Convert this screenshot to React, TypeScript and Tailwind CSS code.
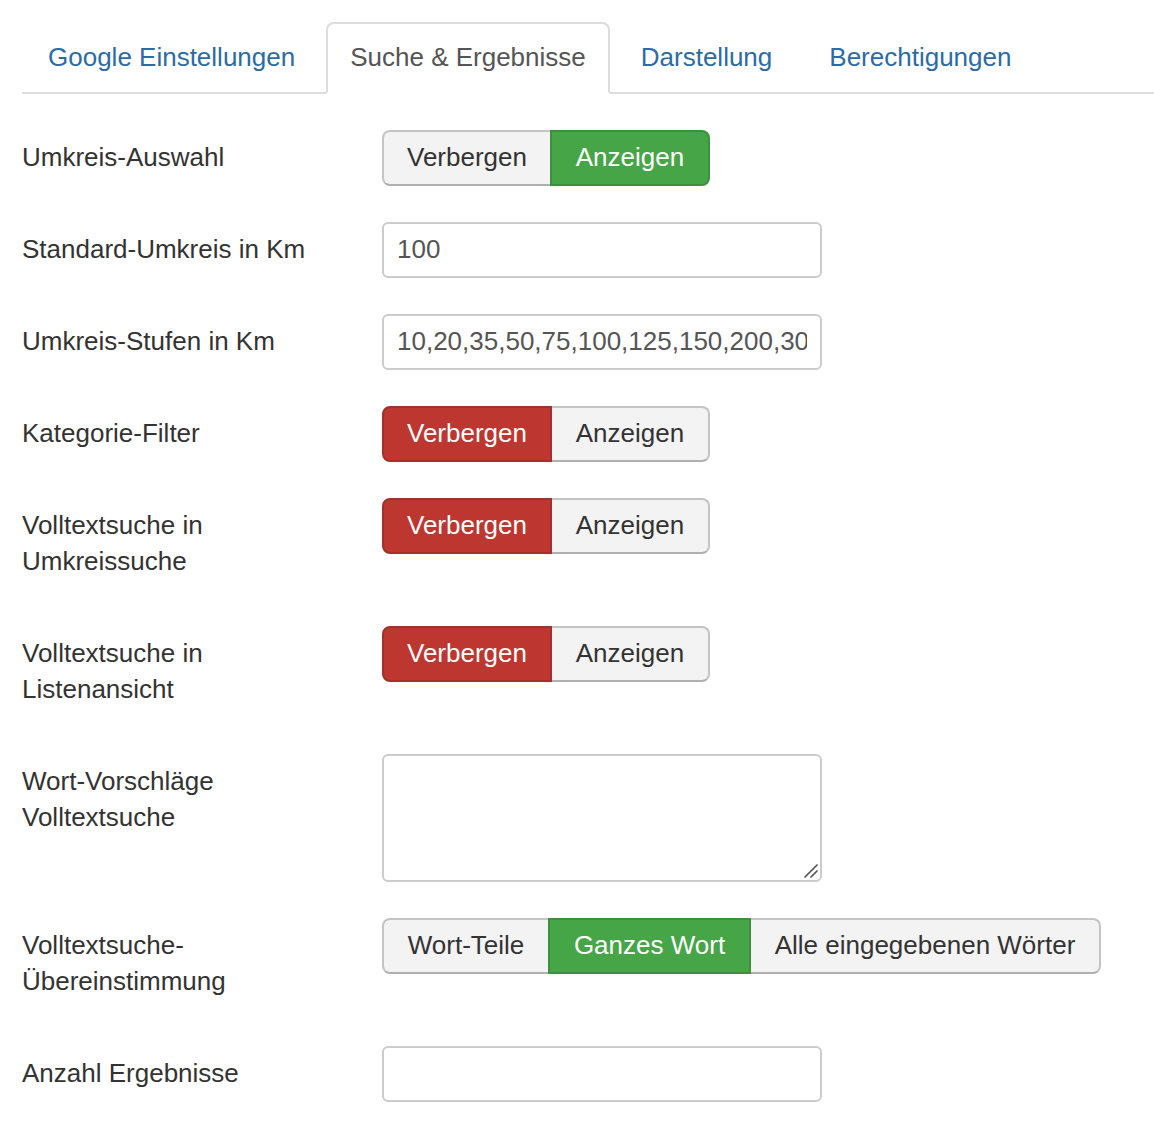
import type { ReactNode } from 'react';

type Tone = 'success' | 'danger' | null;

type Choice = { label: string; width: number; active?: Tone };

const tabs = ['Google Einstellungen', 'Suche & Ergebnisse', 'Darstellung', 'Berechtigungen'];

function Tabs({ active }: { active: number }) {
    return (
        <ul className="flex border-b-2 border-[#dddddd]">
            {tabs.map((t, i) => (
                <li key={t} className="-mb-[2px] mr-[5px]">
                    {i === active ? (
                        <span className="block rounded-t-[8px] border-2 border-[#dddddd] border-b-white bg-white px-[22px] pb-[17px] pt-[15px] leading-[36px] text-[#555555]">
                            {t}
                        </span>
                    ) : (
                        <a className="block border-2 border-transparent px-[24px] pb-[17px] pt-[15px] leading-[36px] text-[#2d6ba3]" href="#">
                            {t}
                        </a>
                    )}
                </li>
            ))}
        </ul>
    );
}

function ButtonGroup({ choices }: { choices: Choice[] }) {
    return (
        <div className="flex">
            {choices.map((c, i) => {
                const first = i === 0;
                const last = i === choices.length - 1;
                const tone =
                    c.active === 'success'
                        ? 'z-10 bg-[#46a546] border-[#3d913d] text-white'
                        : c.active === 'danger'
                            ? 'z-10 bg-[#bd362f] border-[#a3302a] text-white'
                            : 'bg-[#f3f3f3] border-[#c4c4c4] border-b-[#b0b0b0] text-[#333333]';
                return (
                    <button
                        key={c.label}
                        type="button"
                        style={{ width: c.width }}
                        className={`relative h-[56px] border-2 pb-[2px] text-center leading-[36px] ${tone} ${first ? 'rounded-l-[8px]' : '-ml-[2px]'} ${last ? 'rounded-r-[8px]' : ''}`}
                    >
                        {c.label}
                    </button>
                );
            })}
        </div>
    );
}

function TextInput({ value = '' }: { value?: string }) {
    return (
        <input
            type="text"
            readOnly
            value={value}
            className="h-[56px] w-[440px] rounded-[6px] border-2 border-[#cccccc] bg-white px-[13px] pb-[2px] text-[26px] text-[#555555] outline-none"
            style={{ fontFamily: '"Liberation Sans", Arial, sans-serif' }}
        />
    );
}

function Row({ label, children }: { label: ReactNode; children: ReactNode }) {
    return (
        <div className="mb-[36px] flex items-start">
            <div className="w-[360px] shrink-0 pb-[11px] pr-[10px] pt-[9px] leading-[36px] text-[#333333]">{label}</div>
            <div>{children}</div>
        </div>
    );
}

export default function App() {
    const hideShow = (active: 'hide' | 'show'): Choice[] => [
        { label: 'Verbergen', width: 170, active: active === 'hide' ? 'danger' : null },
        { label: 'Anzeigen', width: 160, active: active === 'show' ? 'success' : null },
    ];

    return (
        <div
            className="min-h-[1124px] bg-white pl-[22px] pt-[22px] text-[26px]"
            style={{ fontFamily: '"Liberation Sans", Arial, sans-serif' }}
        >
            <Tabs active={1} />
            <div className="pt-[36px]">
                <Row label="Umkreis-Auswahl">
                    <ButtonGroup choices={hideShow('show')} />
                </Row>
                <Row label="Standard-Umkreis in Km">
                    <TextInput value="100" />
                </Row>
                <Row label="Umkreis-Stufen in Km">
                    <TextInput value="10,20,35,50,75,100,125,150,200,300,400,500" />
                </Row>
                <Row label="Kategorie-Filter">
                    <ButtonGroup choices={hideShow('hide')} />
                </Row>
                <Row label={<>Volltextsuche in<br />Umkreissuche</>}>
                    <ButtonGroup choices={hideShow('hide')} />
                </Row>
                <Row label={<>Volltextsuche in<br />Listenansicht</>}>
                    <ButtonGroup choices={hideShow('hide')} />
                </Row>
                <Row label={<>Wort-Vorschläge<br />Volltextsuche</>}>
                    <div className="relative">
                        <textarea
                            readOnly
                            className="block h-[128px] w-[440px] resize-none rounded-[6px] border-2 border-[#cccccc] bg-white px-[13px] py-[8px] text-[26px] text-[#555555] outline-none"
                        />
                        {/* resize grip */}
                        <svg className="absolute bottom-[3px] right-[3px]" width="16" height="16" viewBox="0 0 16 16">
                            <path d="M14 2 L2 14 M14 8 L8 14" stroke="#555555" strokeWidth="1.7" strokeLinecap="round" />
                        </svg>
                    </div>
                </Row>
                <Row label={<>Volltextsuche-<br />Übereinstimmung</>}>
                    <ButtonGroup
                        choices={[
                            { label: 'Wort-Teile', width: 168 },
                            { label: 'Ganzes Wort', width: 203, active: 'success' },
                            { label: 'Alle eingegebenen Wörter', width: 352 },
                        ]}
                    />
                </Row>
                <Row label="Anzahl Ergebnisse">
                    <TextInput />
                </Row>
            </div>
        </div>
    );
}
